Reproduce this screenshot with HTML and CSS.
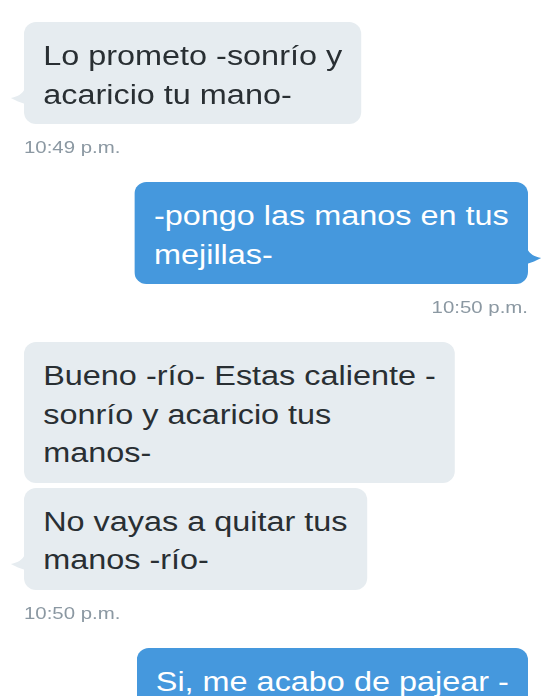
FILE: index.html
```html
<!DOCTYPE html>
<html lang="es">
<head>
<meta charset="utf-8">
<title>Mensajes</title>
<link rel="stylesheet" href="styles.css">
</head>
<body>
<div class="page">
  <div class="group in">
    <div class="bubble">Lo prometo -sonrío y<br>acaricio tu mano-<svg class="tail" viewBox="0 0 12 16"><path d="M12,0 C10,6 5,9 0,10 C4,12.5 8,14.5 12,16 Z"/></svg></div>
    <div class="time">10:49 p.m.</div>
  </div>
  <div class="group out">
    <div class="bubble">-pongo las manos en tus<br>mejillas-<svg class="tail" viewBox="0 0 12 16"><path d="M0,0 C2,6 7,9 12,10 C8,12.5 4,14.5 0,16 Z"/></svg></div>
    <div class="time">10:50 p.m.</div>
  </div>
  <div class="group in">
    <div class="bubble">Bueno -río- Estas caliente -<br>sonrío y acaricio tus<br>manos-</div>
    <div class="bubble">No vayas a quitar tus<br>manos -río-<svg class="tail" viewBox="0 0 12 16"><path d="M12,0 C10,6 5,9 0,10 C4,12.5 8,14.5 12,16 Z"/></svg></div>
    <div class="time">10:50 p.m.</div>
  </div>
  <div class="group out">
    <div class="bubble last">Si, me acabo de pajear -</div>
  </div>
</div>
</body>
</html>
```

FILE: styles.css
```css
html, body {
  margin: 0;
  padding: 0;
  background: #ffffff;
}
body {
  width: 550px;
  height: 696px;
  overflow: hidden;
}
.page {
  width: 458.33px;
  box-sizing: border-box;
  padding: 22px 18.33px 0 20px;
  transform: scaleX(1.2);
  transform-origin: 0 0;
  font-family: "Liberation Sans", Arial, sans-serif;
}
.group {
  display: flex;
  flex-direction: column;
  gap: 5px;
  margin-bottom: 24px;
}
.group.in { align-items: flex-start; }
.group.out { align-items: flex-end; }
.bubble {
  position: relative;
  white-space: nowrap;
  font-size: 27px;
  line-height: 38.5px;
  padding: 15px 16px 10px 16px;
  border-radius: 10px / 12px;
  background: #e6ecf0;
  color: #292f33;
}
.bubble.last {
  padding-bottom: 40px;
}
.group.out .bubble {
  background: #4598dd;
  color: #ffffff;
}
.tail {
  position: absolute;
  bottom: 20px;
  width: 12px;
  height: 16px;
}
.group.in .tail { left: -11px; fill: #e6ecf0; }
.group.out .tail { right: -11px; fill: #4598dd; }
.time {
  margin-top: 9px;
  font-size: 17px;
  line-height: 20px;
  color: #8b98a2;
}
```
